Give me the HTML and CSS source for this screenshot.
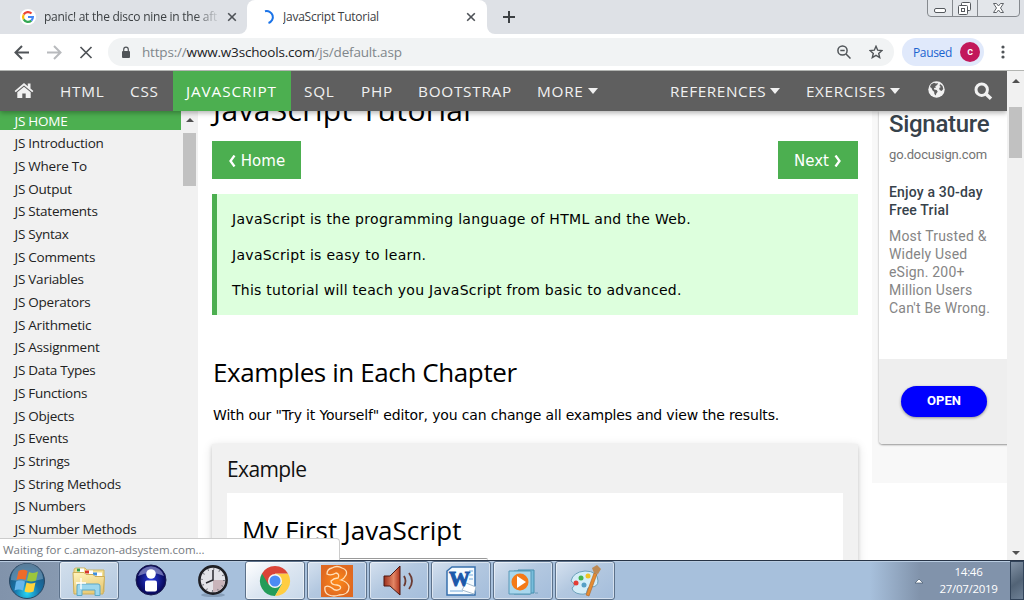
FILE: index.html
```html
<!DOCTYPE html>
<html lang="en">
<head>
<meta charset="utf-8">
<title>JavaScript Tutorial</title>
<link rel="stylesheet" href="styles.css">
</head>
<body>
<div class="screen">
  <header class="tabstrip">
    <div class="tab tab-google">
      <svg class="favicon" width="16" height="16" viewBox="0 0 16 16"><circle cx="8" cy="8" r="8" fill="#fff"/><g fill="none" stroke-width="2.2"><path d="M3.700 5.600A4.900 4.900 0 0 1 11.500 4.500" stroke="#ea4335"/><path d="M3.700 5.600A4.900 4.900 0 0 0 3.700 10.400" stroke="#fbbc05"/><path d="M3.700 10.400A4.900 4.900 0 0 0 11.300 11.600" stroke="#34a853"/><path d="M11.300 11.600A4.900 4.900 0 0 0 12.900 8H8" stroke="#4285f4"/></g></svg>
      <span class="tab-title fade">panic! at the disco nine in the aft</span>
      <svg class="x" width="10" height="10" viewBox="0 0 10 10"><path d="M1.2 1.2l7.6 7.6M8.8 1.2L1.2 8.8" stroke="#4d5156" stroke-width="1.6"/></svg>
    </div>
    <div class="tab tab-active">
      <svg class="spinner" width="16" height="16" viewBox="0 0 16 16"><path d="M4 2.300A6 6 0 0 1 7.500 14" fill="none" stroke="#1a73e8" stroke-width="2"/></svg>
      <span class="tab-title">JavaScript Tutorial</span>
      <svg class="x" width="10" height="10" viewBox="0 0 10 10"><path d="M1.2 1.2l7.6 7.6M8.8 1.2L1.2 8.8" stroke="#4d5156" stroke-width="1.6"/></svg>
    </div>
    <div class="strip-rest">
    <svg class="plus" width="12" height="12" viewBox="0 0 12 12"><path d="M6 0v12M0 6h12" stroke="#3c4043" stroke-width="2"/></svg>
    <svg class="winctl" width="94" height="18" viewBox="0 0 94 18"><path d="M.5 0v13q0 3.500 3.500 3.500h85q3.500 0 3.500-3.500V0M25.500 0v16.500M50.500 0v16.500" fill="#e3e6ea" stroke="#85898e"/><rect x="7.500" y="8.500" width="11" height="4" rx="1.500" fill="#fff" stroke="#55595e"/><rect x="34.500" y="2.500" width="9" height="8" rx="1" fill="#fff" stroke="#55595e"/><rect x="31.500" y="5.500" width="9" height="9" rx="1" fill="#fff" stroke="#55595e"/><rect x="34.500" y="8.500" width="3" height="3" fill="#fff" stroke="#55595e"/><path d="M66.500 3.500h3l2 2.500 2-2.500h3l-3 4.500 3 4.500h-3l-2-2.500-2 2.500h-3l3-4.500z" fill="#fff" stroke="#5f6368"/></svg>
    </div>
  </header>
  <div class="toolbar">
    <svg class="navicons" width="108" height="37" viewBox="0 0 108 37" fill="none" stroke-width="2"><path d="M29 18.500H16M22 12l-6.500 6.500L22 25" stroke="#505458"/><path d="M47 18.500h13M54 12l6.500 6.500L54 25" stroke="#b8babd"/><path d="M80.500 13l11 11M91.500 13l-11 11" stroke="#505458" stroke-width="1.700"/></svg>
    <div class="omnibox">
      <svg class="lock" width="10" height="13" viewBox="0 0 10 13"><rect x="1" y="5" width="8" height="7" rx="1" fill="#505458"/><path d="M2.700 5V3.400a2.300 2.300 0 0 1 4.600 0V5" fill="none" stroke="#505458" stroke-width="1.200"/></svg>
      <span class="url"><i>https://</i>www.w3schools.com<i>/js/default.asp</i></span>
      <svg class="zoomic" width="14" height="14" viewBox="0 0 14 14" fill="none" stroke="#505458" stroke-width="1.500"><circle cx="5.500" cy="5.500" r="4.600"/><path d="M9 9l4.500 4.500M3.300 5.500h4.400"/></svg>
      <svg class="star" width="14" height="14" viewBox="0 0 14 14" fill="none" stroke="#505458" stroke-width="1.400"><path d="M7 1.300l1.700 3.900 4.200.4-3.200 2.800 1 4.200L7 10.400l-3.700 2.200 1-4.200L1.100 5.600l4.200-.4z"/></svg>
    </div>
    <div class="profile"><span>Paused</span><b>c</b></div>
    <svg class="dots" width="4" height="14" viewBox="0 0 4 14" fill="#505458"><circle cx="2" cy="2" r="1.600"/><circle cx="2" cy="7" r="1.600"/><circle cx="2" cy="12" r="1.600"/></svg>
  </div>

  <div class="viewport">
    <div class="page">
      <nav class="topnav">
        <svg class="home" width="20" height="17" viewBox="0 0 20 17" fill="#f1f1f1"><path d="M10 1L.6 9l1.100 1.300L10 3.500l8.300 6.800L19.400 9 16.500 6.500V1.500h-2.700v2.800z"/><path d="M10 4.700L3.300 10.200V16h5v-4.500h3.400V16h5v-5.800z"/></svg>
        <span class="n n1">HTML</span><span class="n n2">CSS</span><span class="n n3">JAVASCRIPT</span><span class="n n4">SQL</span><span class="n n5">PHP</span><span class="n n6">BOOTSTRAP</span><span class="n n7">MORE<i class="caret"></i></span><span class="n n8">REFERENCES<i class="caret"></i></span><span class="n n9">EXERCISES<i class="caret"></i></span>
        <svg class="globe" width="17" height="17" viewBox="0 0 17 17"><circle cx="8.500" cy="8.500" r="8.200" fill="#f1f1f1"/><path d="M3 3.600l3-1.800 2 .8 2-.6-.8 2-2 1.200.8 1.300-2 .5.200 1.500 2.500.6 1 1.700-1.400 1.700-.5 2-1.400-1.400-.3-2.300L4.600 9.500 3.500 7 2 6zM12 3l2.500 2 .8 3-1.700 2-2-1-.4-2 1.700-1-1.300-1z" fill="#5f5f5f"/></svg>
        <svg class="search" width="19" height="18" viewBox="0 0 19 18" fill="none" stroke="#f1f1f1"><circle cx="7.700" cy="7.700" r="5.700" stroke-width="3"/><path d="M12 12l5 4.700" stroke-width="3.500"/></svg>
      </nav>
      <div class="columns">
        <aside class="side">
          <ul class="menu"><li class="on">JS HOME</li><li>JS Introduction</li><li>JS Where To</li><li>JS Output</li><li>JS Statements</li><li>JS Syntax</li><li>JS Comments</li><li>JS Variables</li><li>JS Operators</li><li>JS Arithmetic</li><li>JS Assignment</li><li>JS Data Types</li><li>JS Functions</li><li>JS Objects</li><li>JS Events</li><li>JS Strings</li><li>JS String Methods</li><li>JS Numbers</li><li>JS Number Methods</li></ul>
          <div class="sidebar-scroll"><i class="up"></i><div class="side-thumb"></div></div>
        </aside>
        <main class="main">
          <h1>JavaScript Tutorial</h1>
          <div class="pager"><a class="btn prev"><svg width="8" height="12" viewBox="0 0 8 12"><path d="M6.500 .5L2.500 6l4 5.500" fill="none" stroke="#fff" stroke-width="2.300"/></svg>Home</a><a class="btn next">Next<svg width="8" height="12" viewBox="0 0 8 12"><path d="M1.500 .5l4 5.500-4 5.500" fill="none" stroke="#fff" stroke-width="2.300"/></svg></a></div>
          <div class="note"><p>JavaScript is the programming language of HTML and the Web.</p><p>JavaScript is easy to learn.</p><p class="last">This tutorial will teach you JavaScript from basic to advanced.</p></div>
          <h2>Examples in Each Chapter</h2>
          <p class="intro">With our "Try it Yourself" editor, you can change all examples and view the results.</p>
          <section class="example"><h3>Example</h3><div class="code"><h4>My First JavaScript</h4></div></section>
        </main>
        <aside class="adcol">
          <div class="ad">
            <div class="ad-body"><div class="ad-title">Signature</div><div class="ad-url">go.docusign.com</div><div class="ad-head">Enjoy a 30-day<br>Free Trial</div><div class="ad-text">Most Trusted &amp;<br>Widely Used<br>eSign. 200+<br>Million Users<br>Can't Be Wrong.</div></div>
            <div class="ad-foot"><span class="open">OPEN</span></div>
          </div>
        </aside>
      </div>
    </div>
    <div class="scroll"><i class="up"></i><div class="thumb"></div><i class="down"></i></div>
    <div class="status">Waiting for c.amazon-adsystem.com...</div>
    <div class="peek"></div>
  </div>

  <footer class="taskbar">
    <div class="t start"><svg width="38" height="38" viewBox="0 0 38 38"><defs><radialGradient id="orb" cx=".5" cy=".85" r=".8"><stop offset="0" stop-color="#25d5f5"/><stop offset=".45" stop-color="#1672a8"/><stop offset="1" stop-color="#234e71"/></radialGradient></defs><circle cx="19" cy="19" r="17.500" fill="url(#orb)" stroke="#294763"/><path d="M3 18a16 16 0 0 1 32-1q-14 4-32 1" fill="#a8c5dc" opacity=".4"/><path d="M10.500 9q4.500-2.500 9 0l-2 9q-4.500-2-9 0z" fill="#ee6b29"/><path d="M21 10q4.500 2 9-.5l-2 9q-4.500 2-9 0z" fill="#9cc63b"/><path d="M8 19.500q4.500-2 9 0l-2 9q-4.500-2-8.500 0z" fill="#68b6ec"/><path d="M18.500 20.500q4.500 2 9 0l-2 9q-4.500 2-9 0z" fill="#ffd33c"/></svg></div>
    <div class="t box b1"><svg width="36" height="34" viewBox="0 0 36 34"><defs><linearGradient id="fold" x2=".4" y2="1"><stop stop-color="#fff4bd"/><stop offset="1" stop-color="#e9cb78"/></linearGradient></defs><path d="M3 6q0-2 2-2h9l2 2h17v22H3z" fill="#f3df92" stroke="#cdb564"/><path d="M6 4.500h7v4H6zM14 6.500h8v4h-8zM22 8.500h9v4h-9z" fill="#fff"/><path d="M6 4.500h3v3H6z" fill="#2e9e45"/><path d="M14 6.500h4v3h-4z" fill="#d8352a"/><path d="M22 8.500h4v3h-4z" fill="#3c8fe0"/><path d="M2 8.500h11l2 2h7l2 2h9.500L32 30H3z" fill="url(#fold)" stroke="#cdae58"/><path d="M6 31.500V22q0-2 2-2h19q2 0 2 2v9.500h-5V26H11v5.500z" fill="#9cd7ee" stroke="#5ba7c7"/><path d="M10 14v11M5 19h10" stroke="#fff" stroke-width="1.300"/></svg></div>
    <div class="t person"><svg width="34" height="34" viewBox="0 0 34 34"><defs><radialGradient id="blue"><stop stop-color="#2a3de0"/><stop offset="1" stop-color="#050552"/></radialGradient></defs><circle cx="17" cy="16" r="15" fill="url(#blue)" stroke="#1b1c4e"/><path d="M4 12a13.500 13.500 0 0 1 26 0q-13-6-26 0" fill="#b8bce9" opacity=".55"/><circle cx="17" cy="10" r="4.800" fill="#fff"/><rect x="11" y="16.500" width="12" height="11" rx="2" fill="#fff"/></svg></div>
    <div class="t clock"><svg width="34" height="34" viewBox="0 0 34 34"><ellipse cx="17" cy="31" rx="12" ry="2" fill="#647a94" opacity=".5"/><circle cx="17" cy="16" r="13.600" fill="#e3e3e8" stroke="#1f1f24" stroke-width="2.600"/><path d="M17 16h12a12 12 0 0 1-12 12z" fill="#c9b4ba"/><circle cx="17" cy="16" r="11" fill="none" stroke="#74747c" stroke-width="1.800" stroke-dasharray="1 4.760"/><path d="M17 6v10L10 19" fill="none" stroke="#29292e" stroke-width="1.500"/></svg></div>
    <div class="t box hot"><svg width="32" height="32" viewBox="0 0 32 32"><path d="M16 16L3 8.500A15 15 0 0 0 16 31L23 19z" fill="#249c59"/><path d="M16 16V8.500h13A15 15 0 0 1 16 31l7-12z" fill="#ffcd41"/><path d="M3 8.500A15 15 0 0 1 29 8.500H16V16l-6.500 3.500z" fill="#db4437"/><circle cx="16" cy="16" r="7" fill="#f5f5f5"/><circle cx="16" cy="16" r="5.500" fill="#4c8bf5"/></svg></div>
    <div class="t box"><svg width="32" height="32" viewBox="0 0 32 32"><defs><radialGradient id="orange"><stop stop-color="#ff8a18"/><stop offset="1" stop-color="#df6921"/></radialGradient></defs><path d="M0 0h32v32H0z" fill="url(#orange)"/><path d="M6 9Q6 4 11 3Q16 0 21 3Q27 5 25 10Q23 14 20 15Q27 17 28 22Q28 30 18 30Q13 32 8 30Q3 28 4 22Q7 20 11 23Q15 27 19 24Q21 21 16 20Q10 20 10 16Q13 13 17 13Q19 9 15 8Q10 11 6 9Z" fill="none" stroke="#ffe0ba" stroke-width="1.300"/></svg></div>
    <div class="t box"><svg width="32" height="32" viewBox="0 0 32 32"><defs><linearGradient id="spk" x2="1"><stop stop-color="#9b301d"/><stop offset=".6" stop-color="#e48665"/><stop offset="1" stop-color="#ad341e"/></linearGradient></defs><path d="M1 11h6L17 1v29L7 21H1z" fill="url(#spk)" stroke="#4d1710"/><path d="M21 11q3 5 0 10M26 8q6 8 0 16" fill="none" stroke="#6b3b32" stroke-width="1.800"/></svg></div>
    <div class="t box"><svg width="32" height="32" viewBox="0 0 32 32"><path d="M2 6l5-4h23v28H2z" fill="#f5fbff" stroke="#3770ad" stroke-width="1.500"/><path d="M24 6h4M24 10h4M24 14h4M5 26h13" stroke="#75aadb"/><path d="M17 25l4-7 10 4-2 7z" fill="#fff" stroke="#a4bacd"/><text class="word" x="4" y="21" textLength="21" lengthAdjust="spacingAndGlyphs">W</text></svg></div>
    <div class="t box"><svg width="34" height="32" viewBox="0 0 34 32"><path d="M12 5h16v23H12zM8 6h16v23H8z" fill="#77bddb" stroke="#468fae"/><path d="M3 6h22v23H3z" fill="#a9d7ed" stroke="#5798b7"/><circle cx="14" cy="17" r="8.500" fill="#f47a18"/><path d="M11 11l9 6-9 6z" fill="#fff"/><path d="M29 28h3" stroke="#6d9cba"/></svg></div>
    <div class="t box"><svg width="34" height="34" viewBox="0 0 34 34"><path d="M3 17Q5 8 17 7q13 0 13 10 0 6-7 6-4 0-4 4 0 4-7 3Q5 29 4 24q5-3-1-7z" fill="#d4edf8" stroke="#6da1bb"/><circle cx="8" cy="19" r="2.500" fill="#e33d36"/><circle cx="13" cy="14" r="2.500" fill="#43b44f"/><circle cx="20" cy="12" r="2.500" fill="#f0c322"/><circle cx="16" cy="21" r="2.500" fill="#569fc5"/><path d="M18 31l8-22 3 1-8 22z" fill="#e58c31" stroke="#aa6329" stroke-width=".6"/><path d="M26 9l-2-5 5-3 4 4-3 5z" fill="#bd8a55"/></svg></div>
    <div class="tray"><svg width="10" height="6" viewBox="0 0 10 6"><path d="M1 5l4-4 4 4z" fill="#fff" stroke="#455a70" stroke-width=".7"/></svg><div class="time">14:46<br>27/07/2019</div><i class="peekbtn"></i></div>
  </footer>
</div>
</body>
</html>
```
FILE: styles.css
```css
* { box-sizing: border-box; }
body { margin: 0; }
h1, h2, h3, h4, p, ul { margin: 0; padding: 0; font-weight: 400; }
svg { display: block; flex: none; }
i { font-style: normal; }
.screen { width: 1024px; height: 600px; overflow: hidden; display: flex; flex-direction: column; background: #fff; font-family: "Open Sans", "Noto Sans", sans-serif; white-space: nowrap; }
.tabstrip { height: 34px; flex: none; display: flex; background: linear-gradient(#fff, #fff) 239px 26px / 256px 8px no-repeat #dee1e6; }
.tab { height: 34px; display: flex; align-items: center; }
.tab-google { width: 247px; padding-left: 20px; border-bottom-right-radius: 8px; background: #dee1e6; }
.tab-active { width: 240px; padding-left: 14px; background: #fff; border-radius: 8px 8px 0 0; }
.tab-title { width: 176px; margin-left: 8px; overflow: hidden; font-size: 12px; letter-spacing: -.25px; color: #3c4043; line-height: 20px; }
.tab-active .tab-title { width: 178px; margin-left: 6px; }
.fade { -webkit-mask-image: linear-gradient(90deg, #000 86%, transparent); mask-image: linear-gradient(90deg, #000 86%, transparent); }
.x { margin-left: 7px; }
.tab-active .x { margin-left: 5px; }
.strip-rest { flex: 1; height: 34px; display: flex; background: #dee1e6; border-bottom-left-radius: 8px; }
.plus { margin: 11px 0 0 16px; }
.winctl { margin-left: auto; margin-right: 3px; }
.toolbar { height: 36px; flex: none; display: flex; align-items: center; }
.omnibox { width: 786px; height: 28px; border-radius: 14px; background: #f1f3f4; display: flex; align-items: center; padding-left: 13px; }
.url { width: 702px; margin-left: 11px; font-size: 13.5px; letter-spacing: -.18px; color: #202124; line-height: 28px; }
.url i { color: #80868b; }
.star { margin-left: 18px; }
.zoomic { margin-left: -7px; }
.profile { width: 82px; height: 28px; margin-left: 8px; border-radius: 14px; background: #e0e9fb; display: flex; align-items: center; padding: 0 4px 0 11px; justify-content: space-between; font-size: 12px; letter-spacing: -.35px; color: #1b63cf; }
.profile b { width: 20px; height: 20px; border-radius: 50%; background: #c2185b; color: #fff; font: 500 11px/19px Roboto, sans-serif; text-align: center; }
.dots { margin-left: 17px; }
.viewport { position: relative; height: 490px; flex: none; display: flex; border-top: 1px solid #b3b5b2; }
.page { width: 1007px; height: 489px; overflow: hidden; display: flex; flex-direction: column; }
.topnav { position: relative; z-index: 2; height: 40px; flex: none; display: flex; align-items: center; padding-left: 14px; background: #5f5f5f; box-shadow: 0 2px 5px rgba(0,0,0,.3); color: #f1f1f1; font-size: 15.3px; line-height: 20px; letter-spacing: .75px; }
.n { display: flex; align-items: center; height: 40px; }
.home { margin: 0 26px 2px 0; }
.n1 { width: 70px; } .n2 { width: 43px; }
.n3 { width: 118px; padding-left: 13px; background: #4caf50; margin-right: 13px; color: #fff; letter-spacing: .9px; }
.n4 { width: 57px; } .n5 { width: 57px; } .n6 { width: 119px; } .n7 { width: 133px; } .n8 { width: 136px; } .n9 { width: 122px; }
.n8, .n9 { letter-spacing: .6px; }
.caret { border: 5px solid transparent; border-top: 6px solid #f1f1f1; border-bottom: 0; margin-left: 4px; }
.globe { margin-bottom: 3px; }
.search { margin: 0 0 0 29px; }
.columns { display: flex; height: 449px; }
.side { display: flex; width: 198px; height: 449px; background: #f1f1f1; flex: none; }
.menu { width: 181px; list-style: none; font-size: 13.5px; color: #222; letter-spacing: -.24px; }
.menu li { height: 22.7px; line-height: 22px; padding-left: 14.5px; }
.menu .on { height: 19px; line-height: 20px; background: #4caf50; color: #fff; margin-bottom: 2.3px; }
.sidebar-scroll { width: 17px; display: flex; flex-direction: column; align-items: center; padding-top: 7px; }
.up { border: 4px solid transparent; border-bottom: 4px solid #505050; border-top: 0; }
.down { border: 4px solid transparent; border-top: 4px solid #505050; border-bottom: 0; }
.side-thumb { width: 13px; height: 53px; margin-top: 11px; background: #c1c1c1; }
.main { width: 660px; padding: 0 0 0 14px; flex: none; color: #000; }
h1 { height: 52px; margin-top: -22px; padding-left: 1px; font-size: 30px; letter-spacing: .35px; line-height: 42px; }
.pager { display: flex; justify-content: space-between; width: 646px; }
.btn { height: 38px; display: flex; align-items: center; justify-content: center; gap: 5px; padding-top: 1px; background: #4caf50; color: #fff; font: 15px "DejaVu Sans", Verdana, sans-serif; }
.prev { width: 89px; } .next { width: 80px; }
.note { width: 646px; height: 121px; margin-top: 15px; padding: 14px 0 0 15px; border-left: 5px solid #4caf50; background: #ddffdd; font: 14px/22px "DejaVu Sans", Verdana, sans-serif; letter-spacing: .3px; }
.note p { margin-bottom: 13.5px; }
.note .last { letter-spacing: .26px; }
h2 { margin: 35px 0 0 1px; height: 45px; font-size: 26px; letter-spacing: -.4px; line-height: 44px; }
.intro { margin: 9px 0 0 1px; font: 14px/22px "DejaVu Sans", Verdana, sans-serif; letter-spacing: -.16px; }
.example { width: 646px; height: 130px; margin-top: 18px; padding: 11px 15px 0; background: #f1f1f1; box-shadow: 0 2px 4px rgba(0,0,0,.16), 0 2px 10px rgba(0,0,0,.12); }
h3 { height: 38px; font-size: 21px; letter-spacing: -.6px; line-height: 28px; color: #111; }
.code { height: 90px; background: #fff; padding: 18px 15px; }
h4 { font-size: 26px; letter-spacing: -.04px; line-height: 38px; }
.adcol { width: 135px; height: 372px; margin-left: 14px; padding-left: 7px; background: #f8f8f8; flex: none; font-family: Roboto, sans-serif; }
.ad { width: 140px; height: 333px; border-radius: 0 0 4px 4px; box-shadow: 0 1px 2px rgba(0,0,0,.4); background: #fff; }
.ad-body { height: 248px; padding: 0 0 0 10px; }
.ad-title { height: 28px; font-size: 24px; font-weight: 500; letter-spacing: -.3px; line-height: 27px; color: #37424b; }
.ad-url { font-size: 13px; letter-spacing: -.15px; line-height: 20px; margin-top: 6px; color: #737373; }
.ad-head { margin-top: 18px; font-size: 14px; font-weight: 500; letter-spacing: .17px; line-height: 18px; color: #37424b; }
.ad-text { margin-top: 8px; font-size: 14px; letter-spacing: .2px; line-height: 18px; color: #858585; }
.ad-foot { height: 85px; padding: 27px 22px; background: #eee; border-radius: 0 0 4px 4px; }
.open { display: block; width: 86px; height: 31px; border-radius: 16px; background: #00f; color: #fff; font-size: 13px; font-weight: 700; line-height: 29px; text-align: center; box-shadow: 0 1px 3px rgba(0,0,0,.4); }
.scroll { width: 17px; height: 489px; display: flex; flex-direction: column; align-items: center; padding: 8px 0 5px; background: #f1f1f1; }
.thumb { width: 13px; height: 51px; margin-top: 24px; background: #c1c1c1; }
.scroll .down { margin-top: auto; }
.status { position: absolute; z-index: 3; left: 0; bottom: 0; width: 340px; height: 22px; padding-left: 3px; background: #fff; border: 1px solid #ccc; border-left: 0; border-bottom: 0; border-radius: 0 4px 0 0; font-size: 11.5px; line-height: 22px; color: #75797e; letter-spacing: -.05px; }
.peek { position: absolute; left: 340px; bottom: 0; width: 148px; height: 2px; border-top: 1px solid #999; background: #fff; border-radius: 0 2px 0 0; }
.taskbar { height: 40px; flex: none; display: flex; border-top: 1px solid #273447; background: linear-gradient(90deg, #8193ab 0, #8799b0 58px, #a7c0dc 62px, #a7c0dc 870px, #8193ab 920px); box-shadow: inset 0 1px #b9cce1; }
.t { width: 60px; height: 39px; margin-right: 2px; display: flex; align-items: center; justify-content: center; flex: none; }
.start { width: 54px; margin-right: 5px; }
.box { border: 1px solid #5c718a; border-radius: 3px; background: linear-gradient(145deg, #d5e1ef, #b3c8e0 45%, #a4bddb); box-shadow: inset 0 0 0 1px rgba(255,255,255,.5); }
.b1 { background: linear-gradient(145deg, #d2dfec, #b3c8df); }
.hot { background: linear-gradient(145deg, #fff, #dce6f1 50%, #c7d8ea); }
.word { font: bold 20px "Liberation Serif", serif; fill: #1b58aa; stroke: #1b58aa; }
.tray { margin-left: auto; display: flex; align-items: center; color: #fff; font-size: 11.5px; letter-spacing: -.3px; }
.time { width: 79px; margin: 0 0 1px 5px; text-align: center; line-height: 17px; }
.peekbtn { width: 14px; height: 39px; margin-left: 2px; border: 1px solid #32445a; background: linear-gradient(145deg, #8292a5, #526376 55%, #6d8095); }
```
